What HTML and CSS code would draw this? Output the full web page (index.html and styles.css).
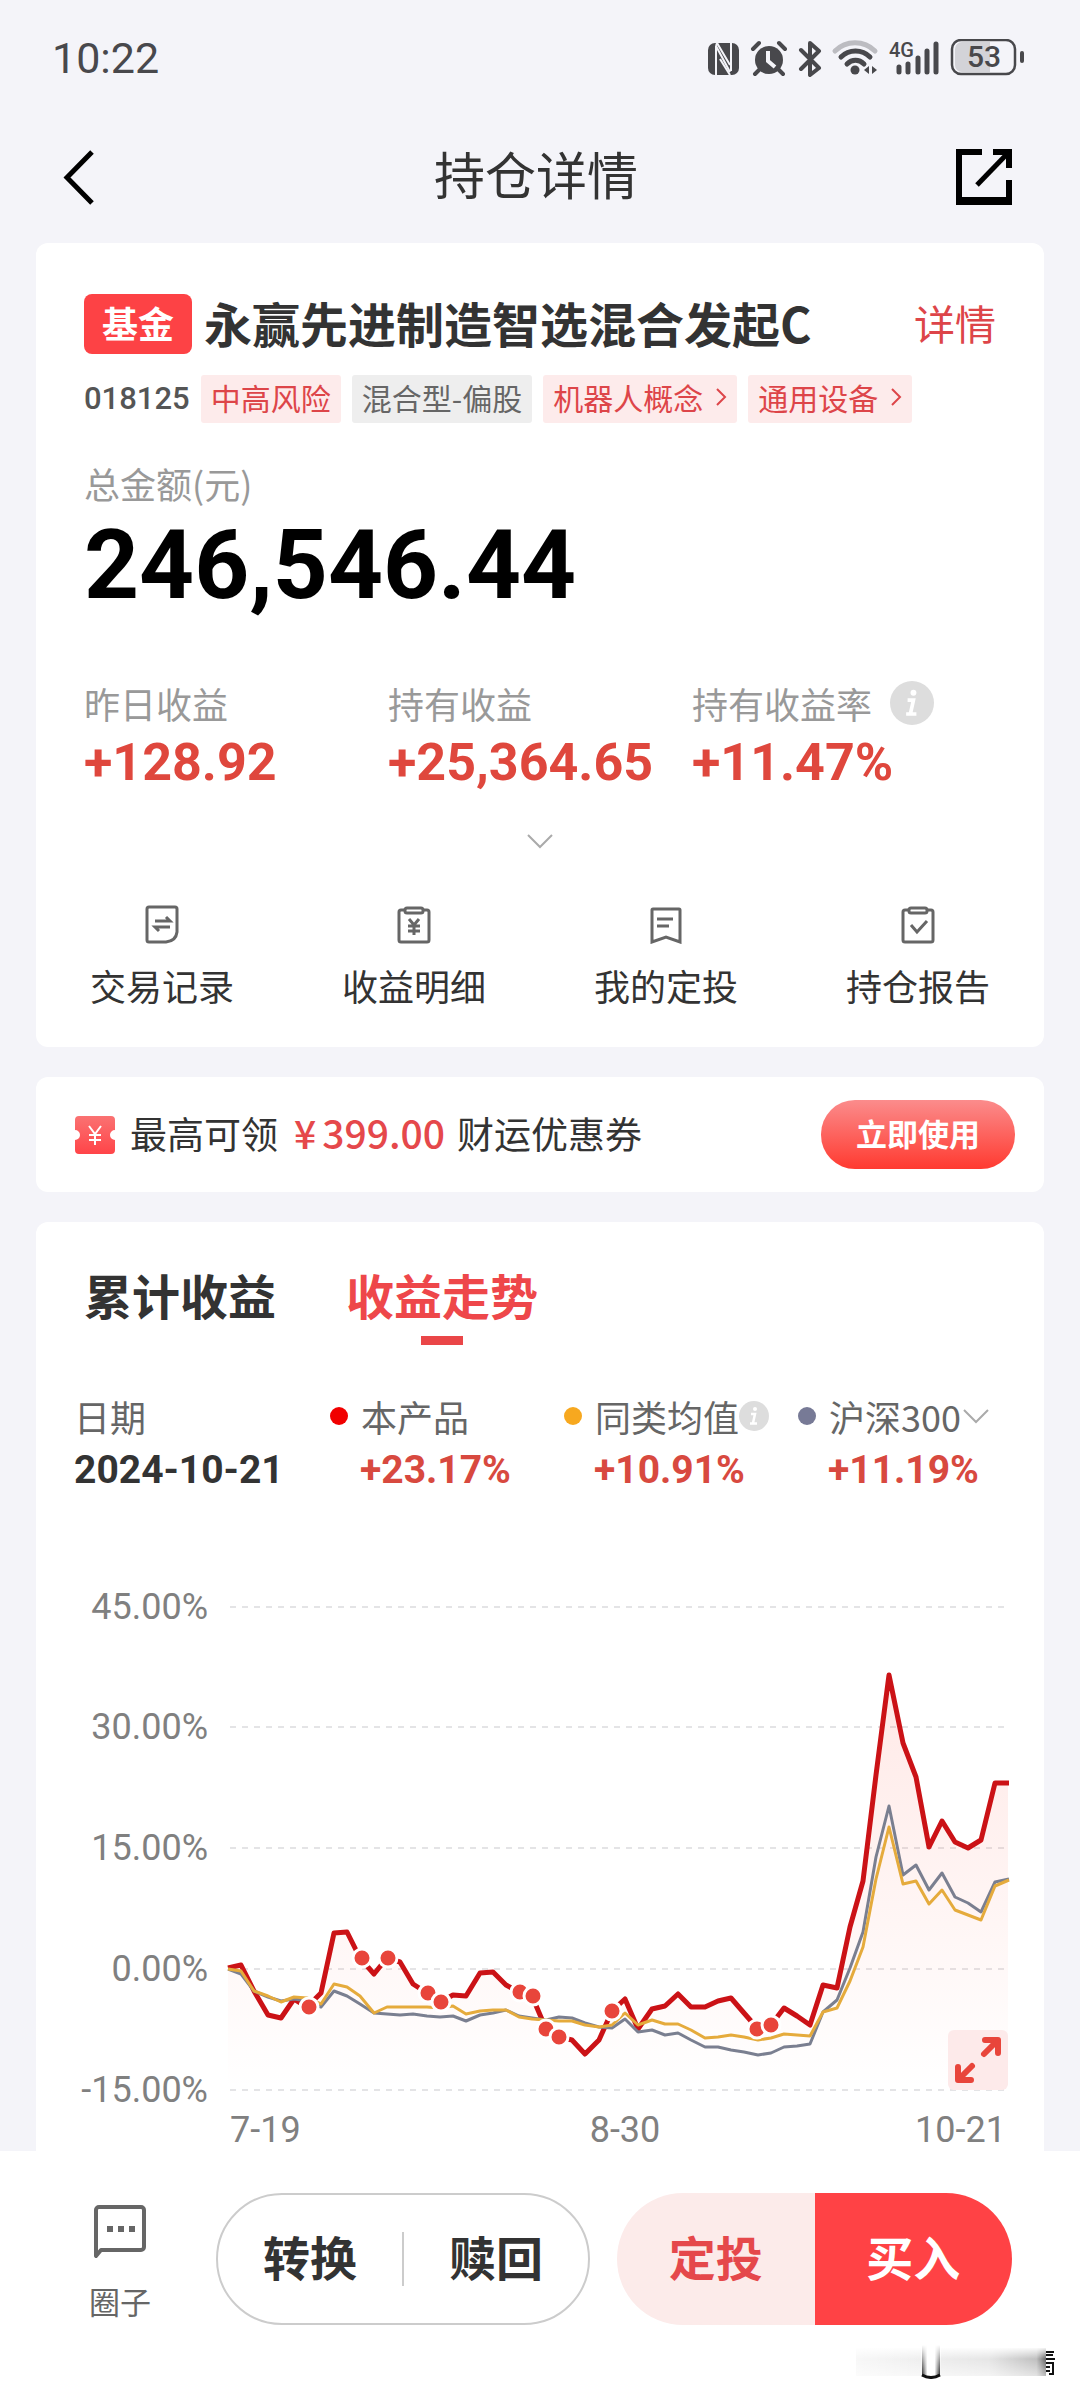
FILE: index.html
```html
<!DOCTYPE html>
<html lang="zh-CN">
<head>
<meta charset="utf-8">
<meta name="viewport" content="width=device-width, initial-scale=1">
<title>持仓详情</title>
<link rel="stylesheet" href="styles.css">
</head>
<body>
<div class="status">
  <span class="time">10:22</span>
  <svg class="status-icons" width="318" height="38" viewBox="0 0 318 38" role="img" aria-label="NFC 闹钟 蓝牙 WiFi 4G 电量">
    <g fill="#48484c">
      <rect x="0" y="4" width="31" height="32" rx="7"/>
      <path d="M8 36V7L22 33M23 4v28M8 7l1-3 13 22" fill="none" stroke="#f4f4f9" stroke-width="2"/>
      <path d="M12 20l10 16" stroke="#f4f4f9" stroke-width="2"/>
      <circle cx="61" cy="21" r="14"/>
      <path d="M45 10l6-6M77 10l-6-6M52 30l-5 5M70 30l5 5" stroke="#48484c" stroke-width="4" stroke-linecap="round"/>
      <path d="M60 12v10l7 6" fill="none" stroke="#f4f4f9" stroke-width="4"/>
      <path d="M93 11l18 18-9 7V4l9 8-18 18" fill="none" stroke="#48484c" stroke-width="4" stroke-linejoin="round" stroke-linecap="round"/>
      <path d="M127 12c11-11 29-11 40 0" fill="none" stroke="#bcbcc1" stroke-width="5" stroke-linecap="round"/>
      <path d="M133 18c8-8 21-8 29 0M139 25c5-5 12-5 17 0" fill="none" stroke="#48484c" stroke-width="5" stroke-linecap="round"/>
      <circle cx="147" cy="31" r="4.500"/>
      <path d="M156 31l5-4v8zM169 31l-5-4v8z"/>
      <text class="net" x="181" y="18">4G</text>
      <path d="M191 28v5M200 25v8M210 19v14M219 12v21M228 5v28" stroke="#48484c" stroke-width="5" stroke-linecap="round"/>
      <path d="M254 3h28v30h-28a7 7 0 0 1-7-7V10a7 7 0 0 1 7-7z" fill="#d3d3d8"/>
      <rect x="244" y="1" width="63" height="34" rx="9" fill="none" stroke="#48484c" stroke-width="2.500"/>
      <rect x="312" y="12" width="4" height="12" rx="2"/>
      <text class="battery" x="276" y="28" text-anchor="middle">53</text>
    </g>
  </svg>
</div>

<header class="topbar">
  <button class="icon-btn" aria-label="返回"><svg width="56" height="56" viewBox="0 0 56 56"><path d="M32 3L7 28.500 32 54" fill="none" stroke="#000" stroke-width="5"/></svg></button>
  <h1>持仓详情</h1>
  <button class="icon-btn" aria-label="分享"><svg width="56" height="56" viewBox="0 0 56 56"><path d="M26 3H3v48h50V31" fill="none" stroke="#000" stroke-width="6"/><path d="M0 50h56v6H0z"/><path d="M21 36L51 5" stroke="#000" stroke-width="5"/><path d="M37 0h19v19h-6V6H37z"/></svg></button>
</header>

<main>
  <section class="card fund">
    <div class="fund-head">
      <span class="badge">基金</span>
      <h2>永赢先进制造智选混合发起C</h2>
      <a class="detail" href="#detail">详情</a>
    </div>
    <div class="tags">
      <span class="code">018125</span>
      <span class="tag">中高风险</span>
      <span class="tag gray">混合型-偏股</span>
      <a class="tag" href="#robot">机器人概念<svg width="12" height="18" viewBox="0 0 12 18"><path d="M2 1l8 8-8 8" fill="none" stroke="currentColor" stroke-width="2"/></svg></a>
      <a class="tag" href="#equipment">通用设备<svg width="12" height="18" viewBox="0 0 12 18"><path d="M2 1l8 8-8 8" fill="none" stroke="currentColor" stroke-width="2"/></svg></a>
    </div>
    <div class="label total-label">总金额(元)</div>
    <div class="total">246,546.44</div>
    <div class="stats">
      <div><div class="label">昨日收益</div><div class="value">+128.92</div></div>
      <div><div class="label">持有收益</div><div class="value">+25,364.65</div></div>
      <div><div class="label">持有收益率<svg class="info" width="44" height="44" viewBox="0 0 30 30"><circle cx="15" cy="15" r="15" fill="#ddd"/><circle cx="16" cy="8" r="2" fill="#fff"/><path d="M12 13h4l-2 9M11 22.500h7" fill="none" stroke="#fff" stroke-width="2.500"/></svg></div><div class="value">+11.47%</div></div>
    </div>
    <button class="expand" aria-label="展开"><svg width="26" height="15" viewBox="0 0 26 15"><path d="M1 1l12 12L25 1" fill="none" stroke="#aaa" stroke-width="2"/></svg></button>
    <nav class="actions">
      <a href="#records"><svg width="40" height="40" viewBox="0 0 40 40"><path d="M7 3h26a2 2 0 0 1 2 2v23q-1 9-11 10H7a2 2 0 0 1-2-2V5a2 2 0 0 1 2-2z"/><path d="M13 17h15l-4-4M28 23H13l4 4"/></svg>交易记录</a>
      <a href="#income"><svg width="40" height="40" viewBox="0 0 40 40"><rect x="5" y="6" width="30" height="32" rx="2"/><rect x="11" y="4" width="18" height="5" rx="2" fill="#fff"/><path d="M15 15l5 6 5-6M14 22h12M14 27h12M20 21v10"/></svg>收益明细</a>
      <a href="#plans"><svg width="40" height="40" viewBox="0 0 40 40"><path d="M7 5h26a1 1 0 0 1 1 1v32l-14-5-14 5V6a1 1 0 0 1 1-1zM11 15h16M11 22h12"/></svg>我的定投</a>
      <a href="#report"><svg width="40" height="40" viewBox="0 0 40 40"><rect x="5" y="6" width="30" height="32" rx="2"/><rect x="11" y="4" width="18" height="5" rx="2" fill="#fff"/><path d="M13 21l6 7 10-11"/></svg>持仓报告</a>
    </nav>
  </section>

  <section class="card coupon">
    <svg width="42" height="40" viewBox="0 0 42 40"><defs><linearGradient id="ticket" x2="0" y2="1"><stop offset="0" stop-color="#fa7272"/><stop offset="1" stop-color="#ff4448"/></linearGradient></defs><path d="M5 1h32a4 4 0 0 1 4 4v10a5 5 0 0 0 0 10v10a4 4 0 0 1-4 4H5a4 4 0 0 1-4-4V25a5 5 0 0 0 0-10V5a4 4 0 0 1 4-4z" fill="url(#ticket)"/><path d="M15 11l6 8 6-8M15 20h12M15 25h12M21 19v11" fill="none" stroke="#fff" stroke-width="2"/></svg>
    <p>最高可领<strong><span class="yen">¥</span>399.00</strong>财运优惠券</p>
    <button class="use">立即使用</button>
  </section>

  <section class="card trend">
    <div class="tabs" role="tablist">
      <button role="tab" aria-selected="false">累计收益</button>
      <button role="tab" aria-selected="true" class="active">收益走势</button>
    </div>
    <div class="legend">
      <div><div class="name">日期</div><div class="num">2024-10-21</div></div>
      <div class="series"><div class="name"><i class="dot red"></i>本产品</div><div class="num">+23.17%</div></div>
      <div class="series"><div class="name"><i class="dot orange"></i>同类均值<svg width="30" height="30" viewBox="0 0 30 30"><circle cx="15" cy="15" r="15" fill="#ddd"/><circle cx="16" cy="8" r="2" fill="#fff"/><path d="M12 13h4l-2 9M11 22.500h7" fill="none" stroke="#fff" stroke-width="2.500"/></svg></div><div class="num">+10.91%</div></div>
      <div class="series"><button class="name"><i class="dot slate"></i>沪深300<svg width="30" height="16" viewBox="0 0 30 16"><path d="M3 2l12 12L27 2" fill="none" stroke="#aaa" stroke-width="2"/></svg></button><div class="num">+11.19%</div></div>
    </div>
    <div class="chart">
      <svg viewBox="0 0 1008 590" role="img" aria-label="收益走势图">
        <defs><linearGradient id="area" gradientUnits="userSpaceOnUse" x1="0" y1="114" x2="0" y2="529"><stop offset="0" stop-color="#ff4530" stop-opacity=".12"/><stop offset="1" stop-color="#ff4530" stop-opacity="0"/></linearGradient></defs>
        <path class="grid" d="M194 46H970M194 166H970M194 287H970M194 408H970M194 529H970"/>
        <g class="axis">
          <g text-anchor="end">
            <text x="172" y="58">45.00%</text><text x="172" y="178">30.00%</text><text x="172" y="299">15.00%</text><text x="172" y="420">0.00%</text><text x="172" y="541">-15.00%</text>
            <text x="970" y="581">10-21</text>
          </g>
          <text x="194" y="581">7-19</text>
          <text x="589" y="581" text-anchor="middle">8-30</text>
        </g>
        <path fill="url(#area)" d="M192 529V407L205 404 218 430 232 454 245 457 258 438 271 446 285 432 298 372 311 371 324 397 338 413 351 397 364 401 377 423 391 432 404 441 417 434 430 435 444 412 457 411 470 424 483 431 496 435 510 468 523 476 536 479 549 493 563 479 576 450 589 438 602 468 616 448 629 445 642 433 655 446 669 446 682 440 695 437 708 452 722 468 735 464 748 447 761 455 774 464 787 424 801 427 814 366 827 320 840 214 853 114 867 182 880 216 893 286 906 260 919 281 932 287 945 279 959 222 972 222V529z"/>
        <polyline class="line main" points="192,407 205,404 218,430 232,454 245,457 258,438 271,446 285,432 298,372 311,371 324,397 338,413 351,397 364,401 377,423 391,432 404,441 417,434 430,435 444,412 457,411 470,424 483,431 496,435 510,468 523,476 536,479 549,493 563,479 576,450 589,438 602,468 616,448 629,445 642,433 655,446 669,446 682,440 695,437 708,452 722,468 735,464 748,447 761,455 774,464 787,424 801,427 814,366 827,320 840,214 853,114 867,182 880,216 893,286 906,260 919,281 932,287 945,279 959,222 973,222"/>
        <polyline class="line index" points="192,408 205,413 218,430 232,436 245,440 258,438 271,440 285,446 298,430 311,435 324,443 338,452 351,453 364,454 377,453 391,455 404,456 417,455 430,460 444,454 457,452 470,449 483,455 496,457 510,459 523,456 536,457 549,462 563,466 576,467 589,458 602,471 616,469 629,474 642,472 655,479 669,486 682,486 695,489 708,491 722,494 735,492 748,486 761,485 774,483 787,451 801,439 814,407 827,371 840,296 853,245 867,314 880,304 893,329 906,312 919,336 932,342 945,351 959,321 973,318"/>
        <polyline class="line peer" points="192,408 205,410 218,430 232,435 245,441 258,436 271,437 285,443 298,423 311,426 324,435 338,452 351,446 364,446 377,446 391,446 404,447 417,445 430,453 444,450 457,449 470,449 483,456 496,458 510,459 523,460 536,460 549,464 563,466 576,464 589,452 602,464 616,459 629,463 642,463 655,469 669,477 682,476 695,474 708,476 722,479 735,477 748,473 761,474 774,475 787,451 801,447 814,420 827,386 840,318 853,266 867,323 880,320 893,343 906,329 919,349 932,354 945,359 959,325 973,319"/>
        <g class="buys">
          <circle cx="273" cy="446" r="9"/><circle cx="326" cy="397" r="9"/><circle cx="352" cy="397" r="9"/><circle cx="392" cy="432" r="9"/><circle cx="405" cy="441" r="9"/><circle cx="484" cy="431" r="9"/><circle cx="497" cy="435" r="9"/><circle cx="510" cy="468" r="9"/><circle cx="523" cy="476" r="9"/><circle cx="576" cy="450" r="9"/><circle cx="721" cy="468" r="9"/><circle cx="735" cy="464" r="9"/>
        </g>
      </svg>
      <button class="zoom" aria-label="放大图表"><svg width="60" height="60" viewBox="0 0 60 60"><g fill="none" stroke="#e8453b" stroke-width="6" stroke-linecap="round" stroke-linejoin="round"><path d="M36 24L49 11M37 10h13v13M24 36L11 49M10 37v13h13"/></g></svg></button>
    </div>
  </section>
</main>

<footer class="bottom">
  <div class="bar">
    <a class="circle" href="#circle"><svg width="56" height="56" viewBox="0 0 56 56"><path d="M4 52V6a3 3 0 0 1 3-3h42a3 3 0 0 1 3 3v37a3 3 0 0 1-3 3H9z" fill="none" stroke="#666" stroke-width="4" stroke-linejoin="round"/><path d="M15 22h6v6h-6zM26 22h6v6h-6zM37 22h6v6h-6z" fill="#666"/></svg>圈子</a>
    <div class="pill outline"><button>转换</button><button>赎回</button></div>
    <div class="pill solid"><button class="plan">定投</button><button class="buy">买入</button></div>
  </div>
  <svg class="smear" width="200" height="34" viewBox="0 0 200 34" aria-hidden="true">
    <defs>
      <linearGradient id="fade"><stop offset="0" stop-color="#000" stop-opacity=".03"/><stop offset=".7" stop-color="#000" stop-opacity=".1"/><stop offset=".95" stop-color="#000" stop-opacity=".25"/><stop offset="1" stop-color="#000" stop-opacity=".6"/></linearGradient>
      <linearGradient id="top" x2="0" y2="1"><stop offset="0" stop-color="#fff"/><stop offset=".4" stop-color="#fff" stop-opacity="0"/><stop offset="1" stop-color="#fff" stop-opacity=".6"/></linearGradient>
      <linearGradient id="tube"><stop offset="0" stop-color="#222"/><stop offset=".3" stop-color="#fff"/><stop offset=".7" stop-color="#fff"/><stop offset="1" stop-color="#222"/></linearGradient>
      <linearGradient id="tubetop" x2="0" y2="1"><stop offset="0" stop-color="#fff"/><stop offset="1" stop-color="#fff" stop-opacity="0"/></linearGradient>
    </defs>
    <path d="M0 3h190v28H0z" fill="url(#fade)"/><path d="M0 2h190v30H0z" fill="url(#top)"/>
    <path d="M66 0h18v31q-9 4-18 0z" fill="url(#tube)"/><path d="M65 0h20v31H65z" fill="url(#tubetop)"/><path d="M66 30q9 5 18 0" fill="none" stroke="#111" stroke-width="3"/>
    <path d="M190 7h8M190 10h7M190 14h9M190 18h7v11h-4M190 22h4M190 26h4" fill="none" stroke="#111" stroke-width="2"/>
  </svg>
</footer>
</body>
</html>
```
FILE: styles.css
```css
* { box-sizing: border-box; }

body {
  margin: 0;
  min-height: 100vh;
  display: flex;
  flex-direction: column;
  background: #f4f4f9;
  color: #333;
  font-family: "Noto Sans CJK SC", sans-serif;
  font-size: 36px;
  line-height: 48px;
}

h1, h2, p { margin: 0; }
a { color: inherit; text-decoration: none; }
svg { display: block; flex: none; }
button {
  margin: 0;
  padding: 0;
  border: 0;
  background: none;
  color: inherit;
  font: inherit;
}

.time, .code, .total, .value, .num, .axis {
  font-family: Roboto, "Noto Sans CJK SC", sans-serif;
}

.status {
  display: flex;
  align-items: center;
  justify-content: space-between;
  height: 116px;
  padding: 0 54px 0 52px;
}
.time {
  color: #48484c;
  font-size: 43px;
}
.net { font: 500 20px Roboto, sans-serif; }
.battery { font: 500 30px Roboto, sans-serif; }

.topbar {
  display: flex;
  align-items: center;
  justify-content: space-between;
  height: 120px;
  padding: 2px 68px 0 60px;
}
.topbar h1 {
  padding-bottom: 8px;
  font-size: 51px;
  font-weight: 400;
  line-height: 64px;
}

main {
  display: flex;
  flex-direction: column;
  gap: 30px;
  padding: 7px 36px 0;
}
.card {
  background: #fff;
  border-radius: 12px;
}

.fund { padding: 51px 0 38px; }
.fund-head, .tags, .total-label, .total, .stats { margin: 0 48px; }
.fund-head {
  display: flex;
  align-items: center;
  gap: 12px;
}
.badge {
  padding: 0 18px 4px;
  border-radius: 8px;
  background: #fd4245;
  color: #fff;
  font-weight: 700;
  line-height: 56px;
}
.fund-head h2 {
  flex: 1;
  padding-bottom: 4px;
  font-size: 48px;
  line-height: 56px;
}
.detail {
  padding-bottom: 4px;
  color: #dd4549;
  font-size: 41px;
}
.tags {
  display: flex;
  align-items: center;
  gap: 11px;
  margin-top: 21px;
  font-size: 30px;
}
.code {
  color: #555;
  font-size: 31px;
  font-weight: 500;
}
.tag {
  display: flex;
  align-items: center;
  gap: 12px;
  padding: 0 10px 4px;
  border-radius: 3px;
  background: #fdebeb;
  color: #dd4549;
  line-height: 44px;
}
.tag.gray {
  background: #eee;
  color: #666;
}

.label {
  display: flex;
  align-items: center;
  color: #999;
}
.total-label { margin-top: 36px; }
.total {
  padding-top: 8px;
  color: #000;
  font-size: 96px;
  font-weight: 700;
  line-height: 100px;
}
.stats {
  display: grid;
  grid-template-columns: repeat(3, 1fr);
  margin-top: 64px;
}
.info { margin-left: 18px; }
.value {
  margin-top: 6px;
  color: #df473d;
  font-size: 52px;
  font-weight: 700;
  line-height: 60px;
}
.expand {
  display: block;
  margin: 41px auto 0;
}
.actions {
  display: grid;
  grid-template-columns: repeat(4, 1fr);
  margin-top: 55px;
}
.actions a {
  display: flex;
  flex-direction: column;
  align-items: center;
  gap: 17px;
}
.actions svg {
  fill: none;
  stroke: #666;
  stroke-width: 3;
}

.coupon {
  display: flex;
  align-items: center;
  gap: 14px;
  min-height: 115px;
  padding: 0 29px 0 38px;
}
.coupon p {
  flex: 1;
  padding-bottom: 4px;
  font-size: 37px;
}
.coupon strong {
  margin: 0 12px 0 16px;
  color: #e5484b;
  font-size: 39px;
  font-weight: 500;
}
.yen { margin-right: 6px; }
.use {
  padding: 0 35px 4px;
  border-radius: 34px;
  background: linear-gradient(#fb8c8c, #ff3a30);
  color: #fff;
  font-size: 31px;
  font-weight: 700;
  line-height: 65px;
}

.tabs {
  display: flex;
  gap: 70px;
  padding: 42px 48px 0;
  font-size: 48px;
  font-weight: 700;
  line-height: 60px;
}
.tabs button {
  display: flex;
  flex-direction: column;
  align-items: center;
  gap: 12px;
}
.tabs .active { color: #ee474a; }
.tabs .active::after {
  content: "";
  width: 42px;
  height: 9px;
  background: #ea4648;
}
.legend {
  display: grid;
  grid-template-columns: 256fr 234fr 234fr 208fr;
  padding: 47px 38px 0;
}
.name {
  display: flex;
  align-items: center;
  color: #666;
}
.num {
  margin-top: 6px;
  font-size: 39px;
  font-weight: 700;
}
.series .num {
  padding-left: 30px;
  color: #d8493f;
}
.dot {
  width: 18px;
  height: 18px;
  margin-right: 13px;
  border-radius: 50%;
}
.red { background: #f10000; }
.orange { background: #f7a81f; }
.slate { background: #777a96; }

.trend { border-radius: 12px 12px 0 0; }
.chart {
  position: relative;
  margin-top: 67px;
}
.chart > svg { width: 100%; }
.grid {
  stroke: #e4e4e6;
  stroke-width: 2;
  stroke-dasharray: 6 6;
}
.axis {
  fill: #808080;
  font-size: 36px;
}
.line {
  fill: none;
  stroke-linejoin: round;
}
.main { stroke: #cb1216; stroke-width: 5; }
.peer { stroke: #e5ab3c; stroke-width: 3; }
.index { stroke: #7a7f90; stroke-width: 3; }
.buys {
  fill: #e8453b;
  stroke: #fff;
  stroke-width: 3;
}
.zoom {
  position: absolute;
  right: 36px;
  bottom: 61px;
  border-radius: 6px;
  background: #fdeaea;
}

.bottom {
  flex: 1;
  background: #fff;
}
.bar {
  display: flex;
  align-items: center;
  padding: 42px 68px 20px 84px;
}
.circle {
  display: flex;
  flex-direction: column;
  align-items: center;
  gap: 17px;
  width: 72px;
  margin-right: 60px;
  padding-top: 10px;
  color: #666;
  font-size: 31px;
}
.pill {
  display: flex;
  overflow: hidden;
  height: 132px;
  border-radius: 66px;
  font-size: 47px;
  font-weight: 700;
}
.pill button {
  flex: 1;
  padding-bottom: 6px;
}
.outline {
  flex: 372;
  align-items: center;
  margin-right: 27px;
  border: 2px solid #ccc;
}
.outline button + button { border-left: 2px solid #ccc; }
.solid { flex: 397; }
.plan {
  background: #fcebea;
  color: #e5484b;
}
.buy {
  background: #ff4245;
  color: #fff;
}
.smear { margin: 0 24px 0 auto; }
```
